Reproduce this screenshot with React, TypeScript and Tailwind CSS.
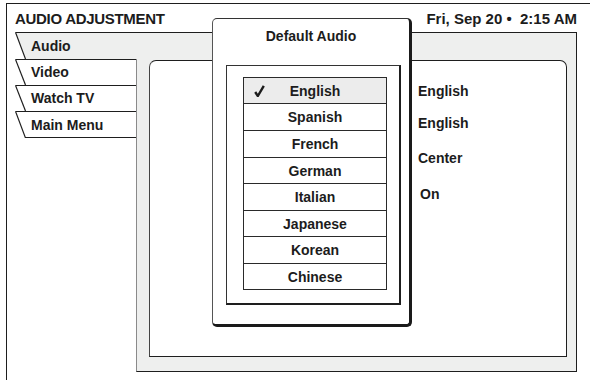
import React from "react";

const LINE = "#1e1e1e";
const GRAY = "#eeefee";

function Tab({ label, h, active, last }: { label: string; h: number; active?: boolean; last?: boolean }) {
  return (
    <div className="relative w-[121px] flex items-center pl-[16px] text-[14px] leading-none" style={{ height: h }}>
      <svg className="absolute inset-0" width="121" height={h} viewBox={`0 0 121 ${h}`}>
        {active && <polygon points={`0,0 121,0 121,${h} 10,${h}`} fill={GRAY} />}
        <path d={`M0.5 0.5 H121`} stroke={LINE} strokeWidth="1" fill="none" />
        <path d={`M0.5 0.5 L10.5 ${h}`} stroke={LINE} strokeWidth="1.2" fill="none" />
        {last && <path d={`M10 ${h - 0.5} H121`} stroke={LINE} strokeWidth="1" fill="none" />}
      </svg>
      <span className="relative">{label}</span>
    </div>
  );
}

const langs: { name: string; h: number }[] = [
  { name: "English", h: 27 },
  { name: "Spanish", h: 27 },
  { name: "French", h: 27 },
  { name: "German", h: 26 },
  { name: "Italian", h: 27 },
  { name: "Japanese", h: 26 },
  { name: "Korean", h: 27 },
  { name: "Chinese", h: 26 },
];

const values: { v: string; h: number; pl: number }[] = [
  { v: "English", h: 32, pl: 0 },
  { v: "English", h: 32, pl: 0 },
  { v: "Center", h: 38, pl: 0 },
  { v: "On", h: 34, pl: 2 },
];

export default function App() {
  return (
    <div className="relative w-[590px] h-[380px] overflow-hidden bg-white text-[#1c1c1c] font-bold [font-family:'Liberation_Sans',Arial,sans-serif]">
      <div className="ml-[6px] mt-[3px] h-[377px] border-l border-t border-[#1e1e1e] flex flex-col">
        {/* header */}
        <div className="h-[28px] flex items-center justify-between pl-[8px] pr-[13px]">
          <span className="text-[15px] tracking-[-0.3px] leading-none">AUDIO ADJUSTMENT</span>
          <span className="text-[15px] leading-none whitespace-pre">Fri, Sep 20 •  2:15 AM</span>
        </div>
        {/* audio row */}
        <div className="flex h-[27px] pl-[8px] pr-[13px]">
          <Tab label="Audio" h={27} active />
          <div className="flex-1 bg-[#eeefee] border-t border-r border-[#1e1e1e]" />
        </div>
        {/* body */}
        <div className="flex h-[313px] pr-[13px]">
          <div className="w-[129px] pl-[8px] flex flex-col">
            <Tab label="Video" h={26} />
            <Tab label="Watch TV" h={26} />
            <Tab label="Main Menu" h={27} last />
          </div>
          <div className="flex-1 flex flex-col bg-[#eeefee] border-l border-l-[#8a8a8a] border-r border-b border-r-[#1e1e1e] border-b-[#1e1e1e] pl-[12px] pr-[9px] pt-[1px] pb-[14px]">
            <div className="flex-1 bg-white border border-[#1e1e1e] border-l-[#444] rounded-t-[7px] pl-[268px] pt-[14px] flex flex-col">
              {values.map((r, i) => (
                <div key={i} className="flex items-center text-[14px] leading-none" style={{ height: r.h, paddingLeft: r.pl }}>
                  {r.v}
                </div>
              ))}
            </div>
          </div>
        </div>
      </div>

      {/* dialog overlay */}
      <div className="absolute left-[212px] top-[18px] w-[200px] h-[309px] bg-white rounded-[5px] border-l border-t border-l-[#555] border-t-[#333] border-r-[3px] border-b-[3px] border-r-[#1a1a1a] border-b-[#1a1a1a] flex flex-col">
        <div className="h-[33px] flex items-center justify-center text-[14px] leading-none">Default Audio</div>
        <div className="mt-[13px] ml-[13px] w-[175px] h-[240px] border-l border-t border-[#333] border-r-2 border-b-2 border-r-[#1e1e1e] border-b-[#1e1e1e] pt-[11px] pl-[16px]">
          <div className="w-[144px] flex flex-col">
            {langs.map((l, i) => (
              <div
                key={l.name}
                className={
                  "relative flex items-center justify-center text-[14px] leading-none border-x border-b border-[#2a2a2a] " +
                  (i === 0 ? "border-t bg-[#ececec]" : "bg-white")
                }
                style={{ height: l.h }}
              >
                {i === 0 && (
                  <svg className="absolute left-[10px] top-[7px]" width="11" height="12" viewBox="0 0 11 12">
                    <path d="M1.2 7 L3.8 11 L9.8 0.8" stroke="#1c1c1c" strokeWidth="2.4" fill="none" strokeLinejoin="miter" strokeLinecap="butt" />
                  </svg>
                )}
                <span>{l.name}</span>
              </div>
            ))}
          </div>
        </div>
      </div>
    </div>
  );
}
